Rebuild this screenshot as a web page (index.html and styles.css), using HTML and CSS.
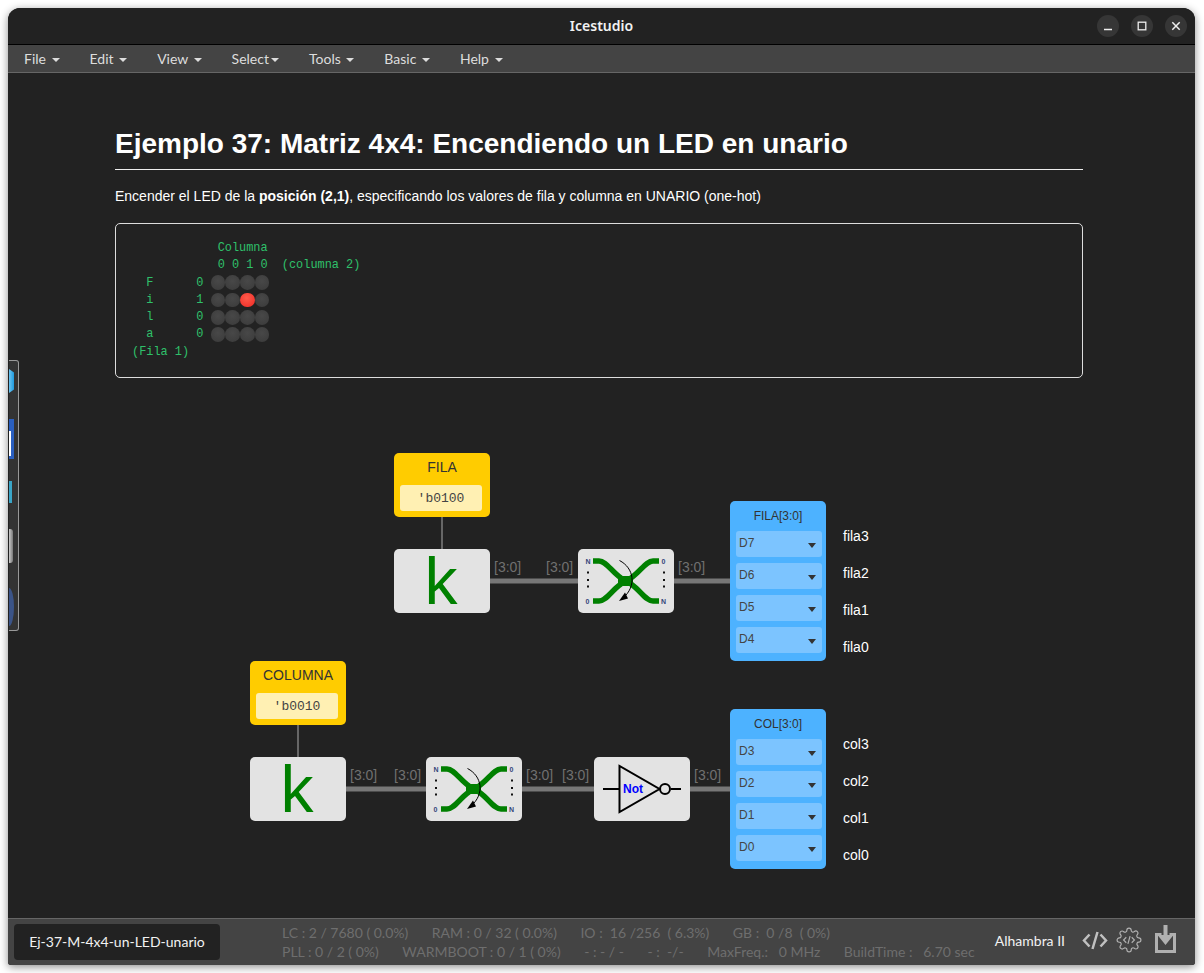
FILE: index.html
```html
<!DOCTYPE html>
<html lang="es">
<head>
<meta charset="utf-8">
<title>Icestudio</title>
<link rel="stylesheet" href="styles.css">
</head>
<body>
<div class="window">
  <header class="titlebar">
    <div class="title">Icestudio</div>
    <div class="winbtns">
      <span class="winbtn"><svg width="22" height="22" viewBox="0 0 22 22"><path d="M7 14.5h8" stroke="#eee" stroke-width="1.3" fill="none"/></svg></span>
      <span class="winbtn"><svg width="22" height="22" viewBox="0 0 22 22"><rect x="7.2" y="7.2" width="7.6" height="7.6" stroke="#eee" stroke-width="1.3" fill="none"/></svg></span>
      <span class="winbtn"><svg width="22" height="22" viewBox="0 0 22 22"><path d="M7.3 7.3l7.4 7.4M14.7 7.3l-7.4 7.4" stroke="#eee" stroke-width="1.5" fill="none"/></svg></span>
    </div>
  </header>
  <nav class="menubar">
    <span class="menu">File <i class="caret"></i></span>
    <span class="menu">Edit <i class="caret"></i></span>
    <span class="menu">View <i class="caret"></i></span>
    <span class="menu">Select<i class="caret"></i></span>
    <span class="menu">Tools <i class="caret"></i></span>
    <span class="menu">Basic <i class="caret"></i></span>
    <span class="menu">Help <i class="caret"></i></span>
  </nav>
  <main class="canvas">
    <svg class="wires" width="1187" height="845" viewBox="8 73 1187 845">
      <path class="wire-thin" d="M442 517V549M298 725V757"/>
      <path class="wire" d="M490 581H578M674 581H730M346 789H426M522 789H594M690 789H730"/>
    </svg>

    <article class="note">
      <h1>Ejemplo 37: Matriz 4x4: Encendiendo un LED en unario</h1>
      <p>Encender el LED de la <strong>posición (2,1)</strong>, especificando los valores de fila y columna en UNARIO (one-hot)</p>
      <pre class="code">            Columna
            0 0 1 0  (columna 2)
  F      0 <span class="led"></span><span class="led"></span><span class="led"></span><span class="led"></span>
  i      1 <span class="led"></span><span class="led"></span><span class="led on"></span><span class="led"></span>
  l      0 <span class="led"></span><span class="led"></span><span class="led"></span><span class="led"></span>
  a      0 <span class="led"></span><span class="led"></span><span class="led"></span><span class="led"></span>
(Fila 1)</pre>
    </article>

    <span class="bus b1">[3:0]</span><span class="bus b2">[3:0]</span><span class="bus b3">[3:0]</span>
    <span class="bus b4">[3:0]</span><span class="bus b5">[3:0]</span><span class="bus b6">[3:0]</span><span class="bus b7">[3:0]</span><span class="bus b8">[3:0]</span>

    <div class="node const n1"><div class="const-name">FILA</div><div class="const-val">'b0100</div></div>
    <div class="node gate k1"><span class="kglyph">k</span></div>
    <div class="node gate s1">
      <svg width="96" height="64" viewBox="0 0 96 64">
        <path class="sw" d="M15 12H21C28 12 33 22 43 29M81 12H75C68 12 63 22 53 29M15 52H21C28 52 33 42 43 35M81 52H75C68 52 63 42 53 35"/>
        <rect x="40" y="27" width="15" height="10" rx="2" fill="#008000"/>
        <path class="sa" d="M41.500 11.500C56 19 59 37 45 49"/>
        <path d="M41 52L50 49.500L47 43.500Z"/>
        <path class="dots" d="M10 22.500v2M10 30v2M10 36.500v2M86 22.500v2M86 30v2M86 36.500v2"/>
        <text class="sl" x="10" y="14.500">N</text><text class="sl" x="9.500" y="54.500">0</text>
        <text class="sl" x="85.500" y="14.500">0</text><text class="sl" x="85.500" y="54.500">N</text>
      </svg>
    </div>
    <div class="node out o1">
      <div class="out-name">FILA[3:0]</div>
      <div class="pin">D7<i class="pin-caret"></i></div>
      <div class="pin">D6<i class="pin-caret"></i></div>
      <div class="pin">D5<i class="pin-caret"></i></div>
      <div class="pin">D4<i class="pin-caret"></i></div>
      <div class="pin-labels"><span>fila3</span><span>fila2</span><span>fila1</span><span>fila0</span></div>
    </div>

    <div class="node const n2"><div class="const-name">COLUMNA</div><div class="const-val">'b0010</div></div>
    <div class="node gate k2"><span class="kglyph">k</span></div>
    <div class="node gate s2">
      <svg width="96" height="64" viewBox="0 0 96 64">
        <path class="sw" d="M15 12H21C28 12 33 22 43 29M81 12H75C68 12 63 22 53 29M15 52H21C28 52 33 42 43 35M81 52H75C68 52 63 42 53 35"/>
        <rect x="40" y="27" width="15" height="10" rx="2" fill="#008000"/>
        <path class="sa" d="M41.500 11.500C56 19 59 37 45 49"/>
        <path d="M41 52L50 49.500L47 43.500Z"/>
        <path class="dots" d="M10 22.500v2M10 30v2M10 36.500v2M86 22.500v2M86 30v2M86 36.500v2"/>
        <text class="sl" x="10" y="14.500">N</text><text class="sl" x="9.500" y="54.500">0</text>
        <text class="sl" x="85.500" y="14.500">0</text><text class="sl" x="85.500" y="54.500">N</text>
      </svg>
    </div>
    <div class="node gate g1">
      <svg width="96" height="64" viewBox="0 0 96 64">
        <path class="gl" d="M9 32H25.500M77 32H87"/>
        <path class="gl" d="M25.500 9V55L65.500 32Z"/>
        <circle class="gl" cx="71" cy="32" r="5"/>
        <text class="gt" x="39" y="36">Not</text>
      </svg>
    </div>
    <div class="node out o2">
      <div class="out-name">COL[3:0]</div>
      <div class="pin">D3<i class="pin-caret"></i></div>
      <div class="pin">D2<i class="pin-caret"></i></div>
      <div class="pin">D1<i class="pin-caret"></i></div>
      <div class="pin">D0<i class="pin-caret"></i></div>
      <div class="pin-labels"><span>col3</span><span>col2</span><span>col1</span><span>col0</span></div>
    </div>
  </main>
  <footer class="statusbar">
    <div class="filename">Ej-37-M-4x4-un-LED-unario</div>
    <div class="stats">
      <div class="stat-row"><span>LC : 2 / 7680 ( 0.0%)</span><span>RAM : 0 / 32 ( 0.0%)</span><span>IO :&nbsp; 16 /256&nbsp; ( 6.3%)</span><span>GB :&nbsp; 0 /8&nbsp; ( 0%)</span></div>
      <div class="stat-row"><span>PLL : 0 / 2 ( 0%)</span><span>WARMBOOT : 0 / 1 ( 0%)</span><span>- : - / -</span><span>- :&nbsp; -/-</span><span>MaxFreq.:&nbsp;&nbsp; 0 MHz</span><span>BuildTime :&nbsp;&nbsp; 6.70 sec</span></div>
    </div>
    <div class="board">Alhambra II</div>
    <svg class="ico-code" width="26" height="22" viewBox="0 0 26 22"><path d="M7.500 4.500L2 10.500L7.500 16.500M18.500 4.500L24 10.500L18.500 16.500M15.500 2L10.500 19"/></svg>
    <svg class="ico-gear" width="26" height="26" viewBox="0 0 24 24"><path d="M19.400 15a1.650 1.650 0 0 0 .33 1.820l.06.06a2 2 0 0 1 0 2.830 2 2 0 0 1-2.830 0l-.06-.06a1.650 1.650 0 0 0-1.820-.33 1.650 1.650 0 0 0-1 1.510V21a2 2 0 0 1-2 2 2 2 0 0 1-2-2v-.09A1.650 1.650 0 0 0 9 19.400a1.650 1.650 0 0 0-1.820.33l-.06.06a2 2 0 0 1-2.830 0 2 2 0 0 1 0-2.830l.06-.06a1.650 1.650 0 0 0 .33-1.820 1.650 1.650 0 0 0-1.510-1H3a2 2 0 0 1-2-2 2 2 0 0 1 2-2h.09A1.650 1.650 0 0 0 4.600 9a1.650 1.650 0 0 0-.33-1.820l-.06-.06a2 2 0 0 1 0-2.830 2 2 0 0 1 2.830 0l.06.06a1.650 1.650 0 0 0 1.820.33H9a1.650 1.650 0 0 0 1-1.510V3a2 2 0 0 1 2-2 2 2 0 0 1 2 2v.09a1.650 1.650 0 0 0 1 1.510 1.650 1.650 0 0 0 1.820-.33l.06-.06a2 2 0 0 1 2.830 0 2 2 0 0 1 0 2.830l-.06.06a1.650 1.650 0 0 0-.33 1.820V9a1.650 1.650 0 0 0 1.510 1H21a2 2 0 0 1 2 2 2 2 0 0 1-2 2h-.09a1.650 1.650 0 0 0-1.510 1z"/><path d="M9.500 9.500L7 12L9.500 14.500M14.500 9.500L17 12L14.500 14.500M13 8.500L11 15.500"/></svg>
    <svg class="ico-save" width="24" height="30" viewBox="0 0 24 30"><path class="save-box" d="M7.500 10.500H2.500V27.500H20.500V10.500H15.500"/><path class="save-arrow" d="M9.500 1H13.500V11H19.500L11.500 21L3.500 11H9.500Z"/></svg>
  </footer>
  <aside class="dock">
    <span class="dk d1"></span><span class="dk d2"></span><span class="dk d3"></span><span class="dk d4"></span><span class="dk d5"></span>
  </aside>
</div>
</body>
</html>
```
FILE: styles.css
```css
* { box-sizing: border-box; }
html, body { margin: 0; height: 100%; background: #fff; overflow: hidden; }
body { padding: 8px 9px 8px 8px; font-family: "Liberation Sans", Arial, sans-serif; }

.window {
  position: relative;
  height: 957px;
  display: flex;
  flex-direction: column;
  background: #222;
  border-radius: 12px 12px 3px 3px;
  box-shadow: 0 2px 8px rgba(0,0,0,.45);
  overflow: hidden;
}

.titlebar {
  height: 37px;
  flex: none;
  display: grid;
  grid-template-columns: 1fr auto 1fr;
  align-items: center;
  background: #222;
  border-bottom: 1px solid #000;
}
.title {
  grid-column: 2;
  padding-bottom: 2px;
  color: #f2f2f2;
  font: 600 14px "Noto Sans", "Open Sans", sans-serif;
}
.winbtns { grid-column: 3; justify-self: end; display: flex; gap: 12px; padding-right: 8px; }
.winbtn { width: 22px; height: 22px; border-radius: 50%; background: #363636; display: block; }
.winbtn svg { display: block; }

.menubar {
  height: 28px;
  flex: none;
  display: flex;
  align-items: center;
  padding-left: 1px;
  background: #444;
  border-bottom: 1px solid #666;
  color: #ddd;
  font: 14px Lato, sans-serif;
}
.menu { padding: 0 15px; white-space: pre; }
.caret {
  display: inline-block;
  width: 0;
  height: 0;
  margin-left: 2px;
  vertical-align: 2px;
  border-top: 4px solid #ddd;
  border-left: 4px solid transparent;
  border-right: 4px solid transparent;
}

.canvas { position: relative; flex: 1; min-height: 0; background: #222; }
.wires { position: absolute; left: 0; top: 0; }
.wire { stroke: #777; stroke-width: 5; fill: none; }
.wire-thin { stroke: #666; stroke-width: 2; fill: none; }

.note { position: relative; margin: 0 112px 0 107px; padding-top: 54px; color: #fff; }
.note h1 {
  margin: 0;
  height: 43px;
  font-size: 28px;
  line-height: 34px;
  font-weight: 700;
  border-bottom: 1px solid #eee;
}
.note p { margin: 18px 0 0; font-size: 14px; line-height: 17px; }
.code {
  margin: 18px 0 0;
  height: 155px;
  padding: 16px 16px;
  border: 1px solid #ddd;
  border-radius: 5px;
  background: #222;
  color: #2fc06a;
  font: 11.9px/17.3px "Liberation Mono", monospace;
}
.led {
  display: inline-block;
  width: 14.7px;
  height: 14.7px;
  margin-block: -2px;
  vertical-align: -2.5px;
  border-radius: 50%;
  background: radial-gradient(circle at 50% 40%, #484848 0, #3c3c3c 85%, #2c2c2c 100%);
}
.led.on { background: radial-gradient(circle at 45% 35%, #ff5a4a, #f0302a 85%, #c8281f 100%); }

.bus { position: absolute; color: #707070; font-size: 14px; line-height: 16px; }
.b1 { left: 486px; top: 486px; }
.b2 { left: 538px; top: 486px; }
.b3 { left: 670px; top: 486px; }
.b4 { left: 342px; top: 694px; }
.b5 { left: 386px; top: 694px; }
.b6 { left: 518px; top: 694px; }
.b7 { left: 554px; top: 694px; }
.b8 { left: 686px; top: 694px; }

.node { position: absolute; width: 96px; border-radius: 5px; }
.n1 { left: 386px; top: 380px; }
.n2 { left: 242px; top: 588px; }
.k1 { left: 386px; top: 476px; }
.k2 { left: 242px; top: 684px; }
.s1 { left: 570px; top: 476px; }
.s2 { left: 418px; top: 684px; }
.g1 { left: 586px; top: 684px; }
.o1 { left: 722px; top: 428px; }
.o2 { left: 722px; top: 636px; }

.const { height: 64px; padding: 0 6px; background: #fc0; }
.const-name { height: 32px; padding-top: 6px; text-align: center; color: #333; font-size: 14px; line-height: 16px; white-space: nowrap; }
.const-val {
  height: 26px;
  margin-right: 2px;
  border-radius: 3px;
  background: #fff0b3;
  color: #444;
  text-align: center;
  font: 13px/28px "Liberation Mono", monospace;
}

.gate { height: 64px; background: #e3e3e3; display: flex; align-items: center; justify-content: center; }
.gate svg { display: block; }
.kglyph { margin-right: 2px; color: #008000; font-size: 66px; line-height: 64px; height: 64px; }
.sw { fill: none; stroke: #008000; stroke-width: 5.5; }
.sa { fill: none; stroke: #000; stroke-width: 1; }
.dots { stroke: #111; stroke-width: 2; fill: none; }
.sl { font: 700 7px "Liberation Sans", sans-serif; fill: #33457a; text-anchor: middle; }
.gl { fill: none; stroke: #000; stroke-width: 2; }
.gt { font: 700 12px "Liberation Sans", sans-serif; fill: #00f; text-anchor: middle; }

.out { height: 160px; padding: 0 4px 0 6px; background: #4db2ff; }
.out-name { height: 30px; margin-right: 2px; padding-top: 8px; text-align: center; color: #333; font-size: 12px; line-height: 14px; }
.pin {
  position: relative;
  height: 26px;
  margin-bottom: 6px;
  padding-left: 3px;
  border-radius: 3px;
  background: #7cc4ff;
  color: #444;
  font-size: 12px;
  line-height: 24px;
}
.pin-caret {
  position: absolute;
  right: 6px;
  top: 12px;
  width: 0;
  height: 0;
  border-top: 5px solid #333;
  border-left: 4px solid transparent;
  border-right: 4px solid transparent;
}
.pin-labels {
  position: absolute;
  left: 113px;
  top: 16px;
  display: grid;
  grid-auto-rows: 37px;
  align-items: center;
  color: #fff;
  font-size: 14px;
}

.statusbar {
  height: 47px;
  flex: none;
  display: flex;
  align-items: center;
  padding-left: 6px;
  background: #444;
  border-top: 1px solid #666;
  font-family: Lato, sans-serif;
  font-size: 14px;
}
.filename {
  width: 206px;
  height: 36px;
  flex: none;
  border-radius: 4px;
  background: #222;
  color: #f2f2f2;
  text-align: center;
  line-height: 36px;
}
.stats { margin-left: 62px; margin-top: -1px; color: #6e6e6e; display: grid; grid-auto-rows: 19px; }
.stat-row { display: flex; gap: 23.5px; white-space: nowrap; line-height: 19px; }
.board { position: absolute; right: 130px; bottom: 16px; color: #f2f2f2; line-height: 17px; }
.ico-code, .ico-gear, .ico-save { position: absolute; fill: none; }
.ico-code { right: 87px; bottom: 13px; stroke: #c0c0c0; stroke-width: 2.5; }
.ico-gear { right: 53px; bottom: 12px; stroke: #b0b0b0; stroke-width: 1.1; }
.ico-save { right: 17px; bottom: 11px; }
.save-box { stroke: #b0b0b0; stroke-width: 3; }
.save-arrow { fill: #b0b0b0; }

.dock {
  position: absolute;
  left: 1px;
  top: 352px;
  width: 10px;
  height: 271px;
  border: 1px solid #999;
  border-left: 0;
  border-radius: 0 3px 3px 0;
  background: #333;
}
.dk { position: absolute; left: 0; width: 5px; display: block; }
.d1 { top: 8px; height: 24px; background: linear-gradient(90deg, #6cc4f0, #1e9be0); clip-path: polygon(0 0, 100% 15%, 100% 85%, 0 100%); }
.d2 { top: 58px; height: 40px; background: #2a5fc0; }
.d2::after { content: ""; position: absolute; left: 0; top: 12px; width: 2px; height: 25px; background: #fff; }
.d3 { top: 120px; height: 22px; width: 3px; background: #3aa6c8; }
.d4 { top: 168px; height: 34px; width: 4px; background: linear-gradient(90deg, #ccc, #777); border-radius: 0 3px 3px 0; }
.d5 { top: 227px; height: 38px; background: #3b5488; border-radius: 0 5px 5px 0 / 0 19px 19px 0; }
```
